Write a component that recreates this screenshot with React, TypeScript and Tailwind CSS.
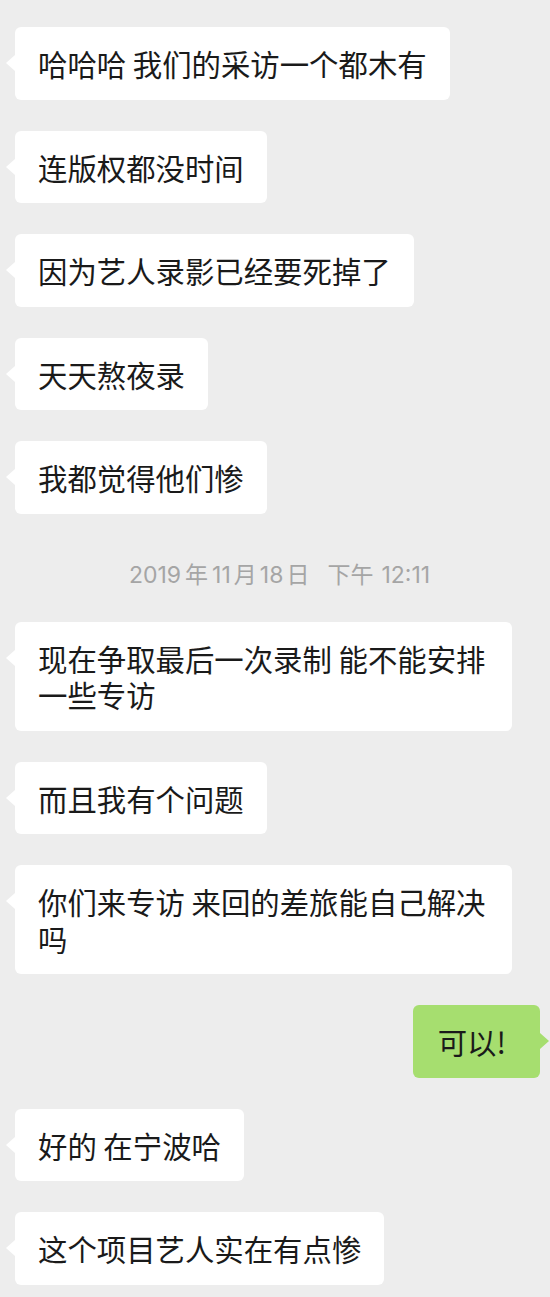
type Msg = { side: 'left' | 'right' | 'time'; text: string };

const messages: Msg[] = [
  { side: 'left', text: '哈哈哈 我们的采访一个都木有' },
  { side: 'left', text: '连版权都没时间' },
  { side: 'left', text: '因为艺人录影已经要死掉了' },
  { side: 'left', text: '天天熬夜录' },
  { side: 'left', text: '我都觉得他们惨' },
  { side: 'time', text: '2019年11月18日 下午12:11' },
  { side: 'left', text: '现在争取最后一次录制 能不能安排一些专访' },
  { side: 'left', text: '而且我有个问题' },
  { side: 'left', text: '你们来专访 来回的差旅能自己解决吗' },
  { side: 'right', text: '可以!' },
  { side: 'left', text: '好的 在宁波哈' },
  { side: 'left', text: '这个项目艺人实在有点惨' },
];

function Bubble({ text, mine }: { text: string; mine: boolean }) {
  return (
    <div
      className={`relative max-w-[497px] rounded-[6px] py-[18px] text-[29.4px] leading-[36.5px] text-[#1a1a1a] ${
        mine ? 'bg-[#a6de6f] pl-[25px] pr-[34px]' : 'bg-white px-[23px]'
      }`}
    >
      {/* tail */}
      <span
        className={`absolute top-[28px] h-0 w-0 border-y-[8px] border-y-transparent ${
          mine
            ? 'right-[-9px] border-l-[9px] border-l-[#a6de6f]'
            : 'left-[-9px] border-r-[9px] border-r-white'
        }`}
      />
      {text}
    </div>
  );
}

// iOS-style date line: latin digits with a bit of air around the CJK glyphs
function TimeLine() {
  return (
    <div
      className="flex h-[46px] items-center justify-center pl-[9px] pt-[16px] text-[23px] leading-none text-[#a5a5a5]"
      style={{ fontFamily: 'Inter, "Noto Sans CJK SC", sans-serif' }}
    >
      <span>2019</span>
      <span className="ml-[4px]">年</span>
      <span className="ml-[4px]">11</span>
      <span className="ml-[3px]">月</span>
      <span className="ml-[3px]">18</span>
      <span className="ml-[3px]">日</span>
      <span className="ml-[18px]">下午</span>
      <span className="ml-[8px]">12:11</span>
    </div>
  );
}

export default function App() {
  return (
    <div
      className="min-h-[1297px] w-[550px] bg-[#ededed] pt-[27px] pb-[20px]"
      style={{ fontFamily: '"Noto Sans CJK SC", sans-serif' }}
    >
      <div className="flex flex-col gap-[31px]">
        {messages.map((m, i) => {
          if (m.side === 'time') return <TimeLine key={i} />;
          const mine = m.side === 'right';
          return (
            <div key={i} className={`flex ${mine ? 'justify-end pr-[10px]' : 'justify-start pl-[15px]'}`}>
              <Bubble text={m.text} mine={mine} />
            </div>
          );
        })}
      </div>
    </div>
  );
}
